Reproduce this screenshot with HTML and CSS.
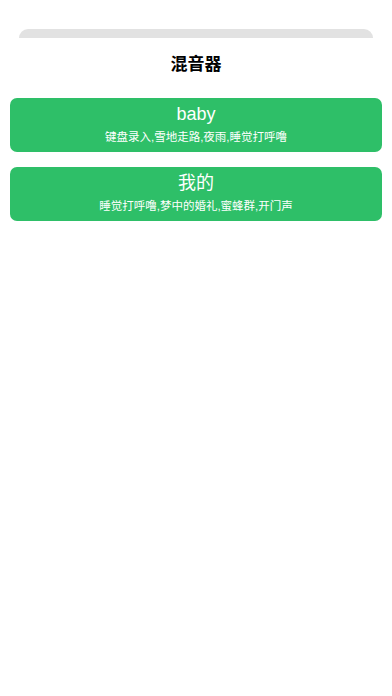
FILE: index.html
```html
<!DOCTYPE html>
<html lang="zh-CN">
<head>
<meta charset="utf-8">
<meta name="viewport" content="width=device-width, initial-scale=1">
<title>混音器</title>
<link rel="stylesheet" href="styles.css">
</head>
<body>
<div class="screen">
  <div class="sheet-back"></div>
  <div class="sheet">
    <h1 class="title">混音器</h1>
    <div class="list">
      <div class="card">
        <div class="card-name">baby</div>
        <div class="card-desc">键盘录入,雪地走路,夜雨,睡觉打呼噜</div>
      </div>
      <div class="card">
        <div class="card-name">我的</div>
        <div class="card-desc">睡觉打呼噜,梦中的婚礼,蜜蜂群,开门声</div>
      </div>
    </div>
  </div>
</div>
</body>
</html>
```

FILE: styles.css
```css
html, body {
  margin: 0;
  padding: 0;
  background: #ffffff;
}

body {
  font-family: "Liberation Sans", "Noto Sans CJK SC", sans-serif;
  color: #000000;
}

.screen {
  width: 392px;
  height: 696px;
  padding-top: 29px;
  box-sizing: border-box;
  overflow: hidden;
}

.sheet-back {
  height: 9px;
  margin: 0 19px;
  background: #e2e2e2;
  border-radius: 10px 10px 0 0;
}

.sheet {
  background: #ffffff;
}

.title {
  margin: 0;
  height: 50px;
  padding-top: 3px;
  box-sizing: border-box;
  text-align: center;
  font-family: "Noto Sans CJK SC", sans-serif;
  font-size: 17px;
  font-weight: 700;
  line-height: 44px;
  color: #000000;
}

.list {
  display: flex;
  flex-direction: column;
  gap: 15px;
  padding: 10px 10px 0;
}

.card {
  height: 54px;
  box-sizing: border-box;
  padding-top: 4px;
  background: #2ebf68;
  border-radius: 7px;
  display: flex;
  flex-direction: column;
  align-items: center;
  color: #ffffff;
}

.card-name {
  font-size: 18px;
  line-height: 24px;
}

.card-desc {
  margin-top: 2px;
  font-size: 11.5px;
  line-height: 18px;
}
```
